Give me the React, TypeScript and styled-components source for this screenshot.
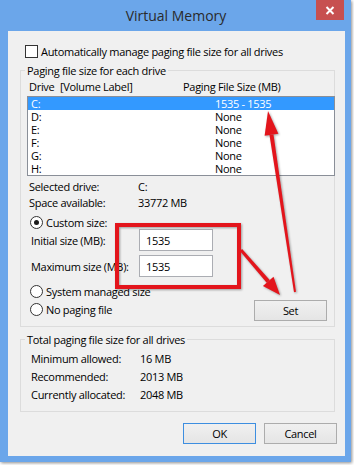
import React from "react"
import styled, { createGlobalStyle } from "styled-components"

const GlobalStyle = createGlobalStyle`
  html, body {
    margin: 0;
    padding: 0;
    background: #ffffff;
  }
  body {
    font-family: "Open Sans", "Noto Sans", sans-serif;
  }
`

const Stage = styled.div`
  position: relative;
  width: 354px;
  height: 465px;
  overflow: hidden;
`

const Window = styled.div`
  width: 351px;
  height: 462px;
  box-sizing: border-box;
  background: #6ba6ea;
  display: flex;
  flex-direction: column;
  box-shadow: 1px 1px 3px rgba(0, 0, 0, 0.45);
`

const TitleBar = styled.div`
  height: 31px;
  flex: none;
  display: grid;
  grid-template-columns: 1fr auto 1fr;
`

const Title = styled.div`
  grid-column: 2;
  align-self: center;
  font-size: 14px;
  color: #2a2a2a;
  padding: 0 0 1px 1px;
`

const CloseButton = styled.div`
  grid-column: 3;
  justify-self: end;
  align-self: start;
  margin-right: 7px;
  width: 28px;
  height: 20px;
  background: #c75050;
  display: flex;
  align-items: center;
  justify-content: center;
`

const Client = styled.div`
  flex: 1;
  margin: 0 6px 6px 8px;
  background: #f0f0f0;
  padding: 13px 8px 0 12px;
  font-size: 11px;
  letter-spacing: -0.3px;
  line-height: 15px;
  color: #000;
`

const CheckRow = styled.div`
  display: flex;
  align-items: center;
  height: 15px;
  margin-left: 5px;
  gap: 3px;
`

const CheckBox = styled.span`
  width: 13px;
  height: 13px;
  box-sizing: border-box;
  border: 1px solid #333;
  background: #fff;
`

const GroupBox = styled.fieldset<{ $top: number }>`
  margin: ${(p) => p.$top}px 2px 0 0;
  padding: 0;
  border: 1px solid #dcdcdc;
  min-width: 0;
`

const Legend = styled.legend`
  margin-left: 4px;
  padding: 0 2px;
  line-height: 15px;
`

const GroupBody = styled.div<{ $pad: string }>`
  padding: ${(p) => p.$pad};
`

const HeaderRow = styled.div`
  display: grid;
  grid-template-columns: 31px 123px 1fr;
  padding-left: 2px;
  height: 15px;
`

const ListBox = styled.div`
  margin: 2px -1px 0 0;
  height: 80px;
  box-sizing: border-box;
  border: 1px solid #8a8f98;
  background: #fff;
`

const ListRow = styled.div<{ $selected?: boolean }>`
  display: grid;
  grid-template-columns: 184px 1fr;
  height: 13px;
  line-height: 13px;
  padding-left: 3px;
  background: ${(p) => (p.$selected ? "#3399ff" : "transparent")};
  color: ${(p) => (p.$selected ? "#fff" : "#000")};
`

const InfoList = styled.div<{ $top: number; $left: number; $line: number }>`
  margin-top: ${(p) => p.$top}px;
  padding-left: ${(p) => p.$left}px;
  display: grid;
  grid-template-columns: 109px 1fr;
  line-height: ${(p) => p.$line}px;
`

const RadioRow = styled.div`
  display: flex;
  align-items: center;
  height: 14px;
  margin-left: 3px;
  gap: 3px;
`

const RadioCircle = styled.span<{ $checked?: boolean }>`
  width: 13px;
  height: 13px;
  box-sizing: border-box;
  border: 1px solid #333;
  border-radius: 50%;
  background: #fff;
  display: flex;
  align-items: center;
  justify-content: center;
  &::after {
    content: "";
    width: 5px;
    height: 5px;
    border-radius: 50%;
    background: ${(p) => (p.$checked ? "#1a1a1a" : "transparent")};
  }
`

const SizeRows = styled.div`
  display: flex;
  flex-direction: column;
  gap: 4px;
  margin-top: 0;
`

const SizeRow = styled.div`
  display: grid;
  grid-template-columns: 108px 74px;
  align-items: center;
  padding-left: 4px;
  height: 22px;
`

const SizeInput = styled.input`
  width: 74px;
  height: 22px;
  box-sizing: border-box;
  border: 1px solid #abadb3;
  background: #fff;
  padding: 0 0 0 6px;
  margin: 0;
  font: inherit;
  letter-spacing: inherit;
  color: #000;
  outline: none;
`

const BottomRow = styled.div`
  display: flex;
  justify-content: space-between;
  align-items: flex-start;
  margin-top: 7px;
`

const RadioColumn = styled.div`
  display: flex;
  flex-direction: column;
  gap: 4px;
`

const PushButton = styled.div<{ $default?: boolean; $top?: number; $right?: number }>`
  width: 73px;
  height: 21px;
  box-sizing: border-box;
  margin-top: ${(p) => p.$top || 0}px;
  margin-right: ${(p) => p.$right || 0}px;
  border: 1px solid ${(p) => (p.$default ? "#3d8ee0" : "#acacac")};
  background: linear-gradient(#f0f0f0, #e5e5e5);
  display: flex;
  align-items: center;
  justify-content: center;
  line-height: 15px;
`

const Footer = styled.div`
  display: flex;
  justify-content: flex-end;
  gap: 8px;
  margin-top: 11px;
`

const Overlay = styled.svg`
  position: absolute;
  left: 0;
  top: 0;
  width: 354px;
  height: 465px;
  pointer-events: none;
  filter: drop-shadow(1px 1px 1px rgba(0, 0, 0, 0.35));
`

const drives = [
  { letter: "C:", size: "1535 - 1535" },
  { letter: "D:", size: "None" },
  { letter: "E:", size: "None" },
  { letter: "F:", size: "None" },
  { letter: "G:", size: "None" },
  { letter: "H:", size: "None" },
]

const RED = "#e3151c"

export default function App() {
  return (
    <Stage>
      <GlobalStyle />
      <Window>
        <TitleBar>
          <Title>Virtual Memory</Title>
          <CloseButton>
            <svg width="10" height="9" viewBox="0 0 10 9">
              <path d="M1.5 1 L8.5 8 M8.5 1 L1.5 8" stroke="#fff" strokeWidth="2" />
            </svg>
          </CloseButton>
        </TitleBar>
        <Client>
          <CheckRow>
            <CheckBox />
            <span>Automatically manage paging file size for all drives</span>
          </CheckRow>

          <GroupBox $top={4}>
            <Legend>Paging file size for each drive</Legend>
            <GroupBody $pad="1px 0 5px 6px">
              <HeaderRow>
                <span>Drive</span>
                <span>[Volume Label]</span>
                <span>Paging File Size (MB)</span>
              </HeaderRow>
              <ListBox>
                {drives.map((d, i) => (
                  <ListRow key={d.letter} $selected={i === 0}>
                    <span>{d.letter}</span>
                    <span>{d.size}</span>
                  </ListRow>
                ))}
              </ListBox>
              <InfoList $top={3} $left={2} $line={16}>
                <span>Selected drive:</span>
                <span>C:</span>
                <span>Space available:</span>
                <span>33772 MB</span>
              </InfoList>
              <RadioRow style={{ marginTop: 4 }}>
                <RadioCircle $checked />
                <span>Custom size:</span>
              </RadioRow>
              <SizeRows>
                <SizeRow>
                  <span>Initial size (MB):</span>
                  <SizeInput readOnly value="1535" />
                </SizeRow>
                <SizeRow>
                  <span>Maximum size (MB):</span>
                  <SizeInput readOnly value="1535" />
                </SizeRow>
              </SizeRows>
              <BottomRow>
                <RadioColumn>
                  <RadioRow>
                    <RadioCircle />
                    <span>System managed size</span>
                  </RadioRow>
                  <RadioRow>
                    <RadioCircle />
                    <span>No paging file</span>
                  </RadioRow>
                </RadioColumn>
                <PushButton $top={16} $right={7}>Set</PushButton>
              </BottomRow>
            </GroupBody>
          </GroupBox>

          <GroupBox $top={5}>
            <Legend>Total paging file size for all drives</Legend>
            <GroupBody $pad="3px 0 7px 0">
              <InfoList $top={0} $left={10} $line={18}>
                <span>Minimum allowed:</span>
                <span>16 MB</span>
                <span>Recommended:</span>
                <span>2013 MB</span>
                <span>Currently allocated:</span>
                <span>2048 MB</span>
              </InfoList>
            </GroupBody>
          </GroupBox>

          <Footer>
            <PushButton $default>OK</PushButton>
            <PushButton>Cancel</PushButton>
          </Footer>
        </Client>
      </Window>

      <Overlay viewBox="0 0 354 465">
        <rect x="117" y="225" width="122" height="62" fill="none" stroke={RED} strokeWidth="4" />
        <polygon points="239.9,251 242.1,249 269.7,280.1 266.7,282.7" fill={RED} />
        <polygon points="280,295 262.9,286 273.5,276.8" fill={RED} />
        <polygon points="294,292.15 296,291.85 273.5,134.4 269.5,135" fill={RED} />
        <polygon points="268,111 278.4,133.7 264.6,135.7" fill={RED} />
      </Overlay>
    </Stage>
  )
}
